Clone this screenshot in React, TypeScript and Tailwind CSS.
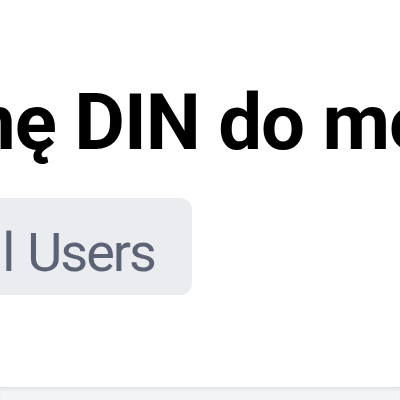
export default function App() {
  return (
    <div className="w-[400px] h-[400px] overflow-hidden bg-white flex flex-col font-['Roboto',sans-serif]">
      {/* Title */}
      <div className="pt-[84px] whitespace-nowrap">
        <h1 className="ml-[-28px] text-[78px] leading-[78px] font-bold tracking-[-1px] text-black">
          nę DIN do modułu
        </h1>
      </div>

      {/* Tab button, clipped on the left */}
      <div className="mt-[36px] w-[192px] flex justify-end">
        <button className="shrink-0 inline-flex items-center gap-[14px] bg-[#ebecf0] rounded-[12px] pl-[20px] pr-[37px] pt-[12px] h-[97px] text-[54px] leading-[54px] tracking-[-2px] text-[#5b6374] whitespace-nowrap">
          <span>All</span>
          <span>Users</span>
        </button>
      </div>

      <div className="flex-1" />

      {/* Bottom panel */}
      <div className="h-[13px] shrink-0 border-t border-[#e3e4e8] bg-[#f3f4f6] shadow-[inset_0_2px_3px_rgba(0,0,0,0.05)]" />
    </div>
  )
}
